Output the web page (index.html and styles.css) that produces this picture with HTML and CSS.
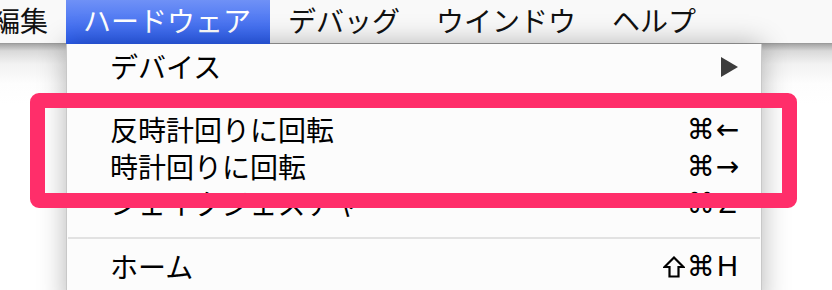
FILE: index.html
```html
<!DOCTYPE html>
<html lang="ja">
<head>
<meta charset="utf-8">
<title>ハードウェア</title>
<link rel="stylesheet" href="styles.css">
</head>
<body>
<div class="screen">
  <nav class="menubar">
    <span class="bar-item first"><span class="bar-text">編集</span></span>
    <span class="bar-item active"><span class="bar-text">ハードウェア</span></span>
    <span class="bar-item"><span class="bar-text">デバッグ</span></span>
    <span class="bar-item"><span class="bar-text">ウインドウ</span></span>
    <span class="bar-item"><span class="bar-text">ヘルプ</span></span>
  </nav>
  <div class="desk">
    <div class="menu">
      <div class="item"><span class="label">デバイス</span><span class="submenu"></span></div>
      <div class="sep"></div>
      <div class="item"><span class="label">反時計回りに回転</span><span class="keys"><span class="k sym">⌘</span><span class="k sym">←</span></span></div>
      <div class="item"><span class="label">時計回りに回転</span><span class="keys"><span class="k sym">⌘</span><span class="k sym">→</span></span></div>
      <div class="item"><span class="label">シェイクジェスチャ</span><span class="keys"><span class="k sym">⌘</span><span class="k">Z</span></span></div>
      <div class="sep"></div>
      <div class="item"><span class="label">ホーム</span><span class="keys"><span class="k icon"><svg class="shift" viewBox="0 0 22 22" width="22" height="22" aria-label="⇧"><path d="M11 1.5 L20.5 11 L15.5 11 L15.5 20.5 L6.5 20.5 L6.5 11 L1.5 11 Z" fill="none" stroke="#000" stroke-width="2.2" stroke-linejoin="miter"/></svg></span><span class="k sym">⌘</span><span class="k">H</span></span></div>
    </div>
    <div class="callout"></div>
  </div>
</div>
</body>
</html>
```

FILE: styles.css
```css
html, body {
  margin: 0;
  padding: 0;
  background: #ffffff;
}
body {
  width: 832px;
  height: 290px;
  overflow: hidden;
  font-family: "Noto Sans CJK JP", "Noto Sans", sans-serif;
}
.screen {
  position: relative;
  width: 832px;
  height: 290px;
  overflow: hidden;
}
.menubar {
  display: flex;
  height: 43px;
  background: #f9f9f9;
  border-bottom: 1px solid #9c9c9c;
  white-space: nowrap;
}
.bar-item {
  height: 44px;
  box-sizing: border-box;
  padding: 0 18px;
  color: #111;
  flex: none;
}
.bar-text {
  display: block;
  font-size: 28px;
  line-height: 41px;
}
.bar-item.first {
  margin-left: -26px;
}
.bar-item.active {
  color: #fff;
  background: linear-gradient(#6f91f6, #2b5def);
  padding-left: 17px;
  padding-right: 19px;
}
.desk {
  position: relative;
  height: 246px;
  background: linear-gradient(#a6a6a6 0, #d9d9d9 7px, #f2f2f2 20px, #fdfdfd 40px, #ffffff 60px);
}
.menu {
  margin-left: 66px;
  width: 694px;
  border-left: 1px solid #c8c8c8;
  border-right: 1px solid #c8c8c8;
  background: #fcfcfc;
  padding-top: 4px;
  box-shadow: 0 0 26px rgba(0, 0, 0, 0.3);
  height: 260px;
}
.item {
  display: flex;
  align-items: center;
  justify-content: space-between;
  height: 37px;
  padding: 0 20px 0 43px;
}
.label {
  font-size: 28px;
  line-height: 41px;
  color: #000;
  white-space: nowrap;
}
.submenu {
  width: 0;
  height: 0;
  border-left: 17px solid #3c3c3c;
  border-top: 10px solid transparent;
  border-bottom: 10px solid transparent;
  margin-right: 3px;
}
.keys {
  display: flex;
  align-items: center;
  font-family: "Liberation Sans", "DejaVu Sans", sans-serif;
  font-size: 29px;
  line-height: 37px;
  color: #000;
}
.k {
  display: inline-block;
  width: 27px;
  text-align: center;
}
.k.sym {
  font-family: "DejaVu Sans", sans-serif;
  font-size: 28px;
}
.k.icon {
  display: flex;
  justify-content: center;
  align-items: center;
  height: 37px;
}
.shift {
  display: block;
}
.sep {
  height: 26px;
  box-sizing: border-box;
  padding-top: 15px;
  margin: 0 1px;
}
.sep::before {
  content: "";
  display: block;
  height: 2px;
  background: #e2e2e2;
}
.callout {
  position: absolute;
  left: 30px;
  top: 49px;
  width: 767px;
  height: 115px;
  box-sizing: border-box;
  border: 15px solid #ff2e6a;
  border-radius: 9px;
}
```
